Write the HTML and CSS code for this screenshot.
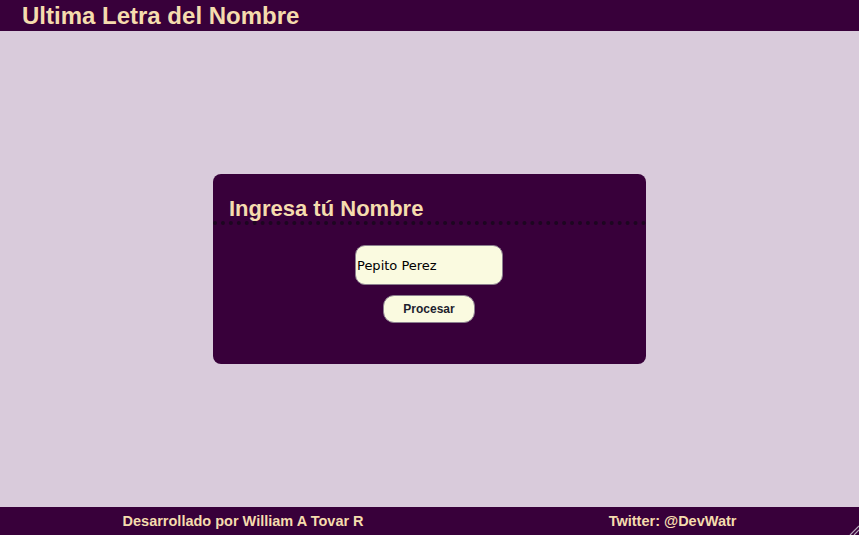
FILE: index.html
```html
<!DOCTYPE html>
<html lang="es">
<head>
<meta charset="utf-8">
<title>Ultima Letra del Nombre</title>
<link rel="stylesheet" href="styles.css">
</head>
<body>
<header class="top">
  <h1 class="title">Ultima Letra del Nombre</h1>
</header>
<main class="main">
  <section class="card">
    <h2 class="card-title">Ingresa tú Nombre</h2>
    <form class="form">
      <input class="name-input" type="text" value="Pepito Perez">
      <button class="btn" type="button">Procesar</button>
    </form>
  </section>
</main>
<footer class="foot">
  <span class="foot-text">Desarrollado por William A Tovar R</span>
  <span class="foot-text">Twitter: @DevWatr</span>
  <svg class="grip" width="10" height="10" viewBox="0 0 10 10"><path d="M10 1 L1 10 M10 5 L5 10" stroke="#b9a9bc" stroke-width="1.2" fill="none"/></svg>
</footer>
</body>
</html>
```
FILE: styles.css
```css
* { box-sizing: border-box; }
html, body { height: 100%; }
body {
  margin: 0;
  display: flex;
  flex-direction: column;
  background: #d9cbdb;
  font-family: "Liberation Sans", Arial, sans-serif;
}
.top {
  height: 31px;
  background: #38003a;
  padding-left: 22px;
  display: flex;
  align-items: center;
}
.title {
  margin: 0;
  font-size: 24px;
  font-weight: bold;
  color: #f5dcae;
  line-height: 31px;
}
.main {
  flex: 1;
  display: flex;
  align-items: center;
  justify-content: center;
}
.card {
  width: 433px;
  height: 190px;
  background: #38003a;
  border-radius: 8px;
}
.card-title {
  margin: 0;
  padding: 22px 16px 0;
  height: 51px;
  font-size: 22px;
  line-height: 26px;
  color: #f5dcae;
  border-bottom: 4px dotted #1c0620;
}
.form {
  display: flex;
  flex-direction: column;
  align-items: center;
  padding-top: 20px;
  padding-right: 1px;
  gap: 10px;
}
.name-input {
  width: 148px;
  height: 40px;
  margin: 0;
  padding: 0 1px;
  border: 1px solid #8c7f8f;
  border-radius: 10px;
  background: #fafae0;
  font-family: "DejaVu Sans", Verdana, sans-serif;
  font-size: 13px;
  color: #000;
  outline: none;
}
.btn {
  width: 92px;
  height: 28px;
  margin: 0;
  padding: 0;
  border: 1px solid #8c7f8f;
  border-radius: 11px;
  background: #fafae0;
  font-family: "Liberation Sans", Arial, sans-serif;
  font-weight: bold;
  font-size: 12px;
  color: #1e1e2e;
}
.foot {
  position: relative;
  height: 28px;
  background: #38003a;
  display: flex;
  align-items: center;
  justify-content: space-around;
}
.foot-text {
  font-size: 14.5px;
  font-weight: bold;
  color: #f5dcae;
}
.grip {
  position: absolute;
  right: 0;
  bottom: 0;
}
```
